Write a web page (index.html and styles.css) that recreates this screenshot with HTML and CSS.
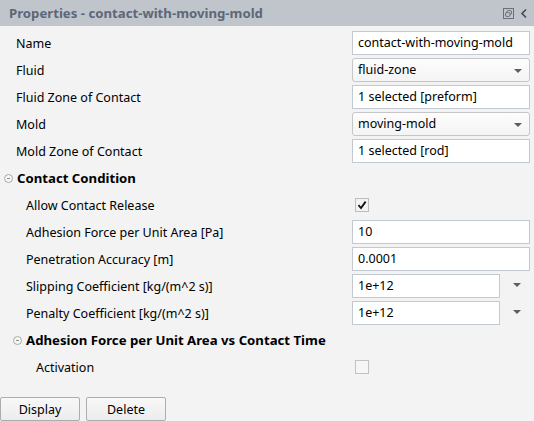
FILE: index.html
```html
<!DOCTYPE html>
<html>
<head>
<meta charset="utf-8">
<link rel="stylesheet" href="styles.css">
</head>
<body>
<div class="panel">
  <div class="titlebar">
    <span class="title">Properties - contact-with-moving-mold</span>
    <span class="tools">
      <svg width="11" height="11" viewBox="0 0 11 11"><rect x="0.5" y="0.5" width="10" height="10" fill="none" stroke="#6b6f76"/><rect x="4" y="2.5" width="4.5" height="4" rx="1.5" fill="none" stroke="#6b6f76"/><rect x="2.5" y="4.5" width="4.5" height="4" rx="1.5" fill="#c0c4cb" stroke="#6b6f76"/></svg>
      <svg width="8" height="11" viewBox="0 0 8 11"><path d="M6 1.5 L2 5.5 L6 9.5" fill="none" stroke="#44484f" stroke-width="1.6"/></svg>
    </span>
  </div>
  <div class="body">
    <div class="row l1"><span class="label">Name</span><div class="ctl input">contact-with-moving-mold</div></div>
    <div class="row l1"><span class="label">Fluid</span><div class="ctl select">fluid-zone<i class="arrow"></i></div></div>
    <div class="row l1"><span class="label">Fluid Zone of Contact</span><div class="ctl input">1 selected [preform]</div></div>
    <div class="row l1"><span class="label">Mold</span><div class="ctl select">moving-mold<i class="arrow"></i></div></div>
    <div class="row l1"><span class="label">Mold Zone of Contact</span><div class="ctl input">1 selected [rod]</div></div>
    <div class="row head h1"><i class="coll"></i><span class="label">Contact Condition</span></div>
    <div class="row l2"><span class="label">Allow Contact Release</span><div class="ctl cbwrap"><span class="cb checked"><svg width="10" height="10" viewBox="0 0 10 10"><path d="M1.5 5.2 L4 8 L8.6 1.6" fill="none" stroke="#111" stroke-width="1.8"/></svg></span></div></div>
    <div class="row l2"><span class="label">Adhesion Force per Unit Area [Pa]</span><div class="ctl input">10</div></div>
    <div class="row l2"><span class="label">Penetration Accuracy [m]</span><div class="ctl input">0.0001</div></div>
    <div class="row l2"><span class="label">Slipping Coefficient [kg/(m^2 s)]</span><div class="ctl combo"><div class="input short">1e+12</div><i class="arrow"></i></div></div>
    <div class="row l2"><span class="label">Penalty Coefficient [kg/(m^2 s)]</span><div class="ctl combo"><div class="input short">1e+12</div><i class="arrow"></i></div></div>
    <div class="row head h2"><i class="coll"></i><span class="label">Adhesion Force per Unit Area vs Contact Time</span></div>
    <div class="row l3"><span class="label">Activation</span><div class="ctl cbwrap"><span class="cb"></span></div></div>
  </div>
  <div class="buttons">
    <button class="btn b1">Display</button>
    <button class="btn b2">Delete</button>
  </div>
</div>
</body>
</html>
```
FILE: styles.css
```css
html, body {
  margin: 0;
  padding: 0;
  background: #f3f3f3;
}
body {
  width: 534px;
  height: 421px;
  overflow: hidden;
  font-family: "Noto Sans", "Open Sans", sans-serif;
  font-size: 12.5px;
  color: #000;
}
.titlebar {
  height: 26px;
  background: #c0c4cb;
  display: flex;
  align-items: center;
  justify-content: space-between;
  padding: 0 6px 0 9px;
}
.title {
  font-weight: bold;
  font-size: 13.2px;
  color: #5d6778;
}
.tools {
  display: flex;
  align-items: center;
  gap: 6px;
}
.tools svg { display: block; }
.body {
  padding-top: 4px;
}
.row {
  height: 27px;
  display: flex;
  align-items: flex-start;
  padding-right: 4px;
}
.label {
  flex: 1;
  line-height: 27px;
  white-space: nowrap;
}
.l1 { padding-left: 16px; }
.l2 { padding-left: 26px; }
.l3 { padding-left: 36px; }
.ctl {
  margin-top: 1px;
  width: 178px;
  height: 24px;
  box-sizing: border-box;
  flex: none;
}
.input {
  background: #fff;
  border: 1px solid #c3c9d3;
  padding: 0 5px;
  line-height: 22px;
  box-sizing: border-box;
  height: 24px;
  white-space: nowrap;
  overflow: hidden;
}
.select {
  position: relative;
  border: 1px solid #c6c6c6;
  border-radius: 3px;
  background: linear-gradient(#fdfdfd, #f4f4f4);
  padding: 0 5px;
  line-height: 22px;
}
.arrow {
  display: block;
  width: 0;
  height: 0;
  border-left: 4px solid transparent;
  border-right: 4px solid transparent;
  border-top: 4px solid #5e5e5e;
}
.select .arrow {
  position: absolute;
  right: 7px;
  top: 10px;
}
.combo {
  display: flex;
  align-items: center;
}
.input.short {
  width: 148px;
  flex: none;
}
.combo .arrow {
  margin-left: 13px;
  margin-top: -2px;
}
.head {
  align-items: center;
}
.head .label {
  font-weight: bold;
  font-size: 13.2px;
}
.h1 { padding-left: 4px; }
.h2 { padding-left: 13px; }
.coll {
  display: block;
  width: 7px;
  height: 7px;
  border: 1px solid #a9a9a9;
  border-radius: 50%;
  margin-right: 4px;
  position: relative;
  background: #f6f6f6;
}
.coll::after {
  content: "";
  position: absolute;
  left: 2px;
  top: 3px;
  width: 3px;
  height: 1px;
  background: #8a8a8a;
}
.cbwrap {
  display: flex;
  align-items: center;
  padding-left: 3px;
}
.cb {
  width: 14px;
  height: 14px;
  box-sizing: border-box;
  border: 1px solid #c2c2c2;
  background: #f6f6f6;
  display: flex;
  align-items: center;
  justify-content: center;
}
.cb.checked { border-color: #bdbdbd; background: #f3f3f3; }
.cb svg { display: block; }
.buttons {
  margin-top: 16px;
  display: flex;
  gap: 6px;
}
.btn {
  font-family: inherit;
  font-size: 12.5px;
  color: #000;
  height: 24px;
  border: 1px solid #adadad;
  border-radius: 2px;
  background: linear-gradient(#f8f8f8, #ececec);
  padding: 0;
}
.b1 { width: 80px; }
.b2 { width: 80px; }
```
